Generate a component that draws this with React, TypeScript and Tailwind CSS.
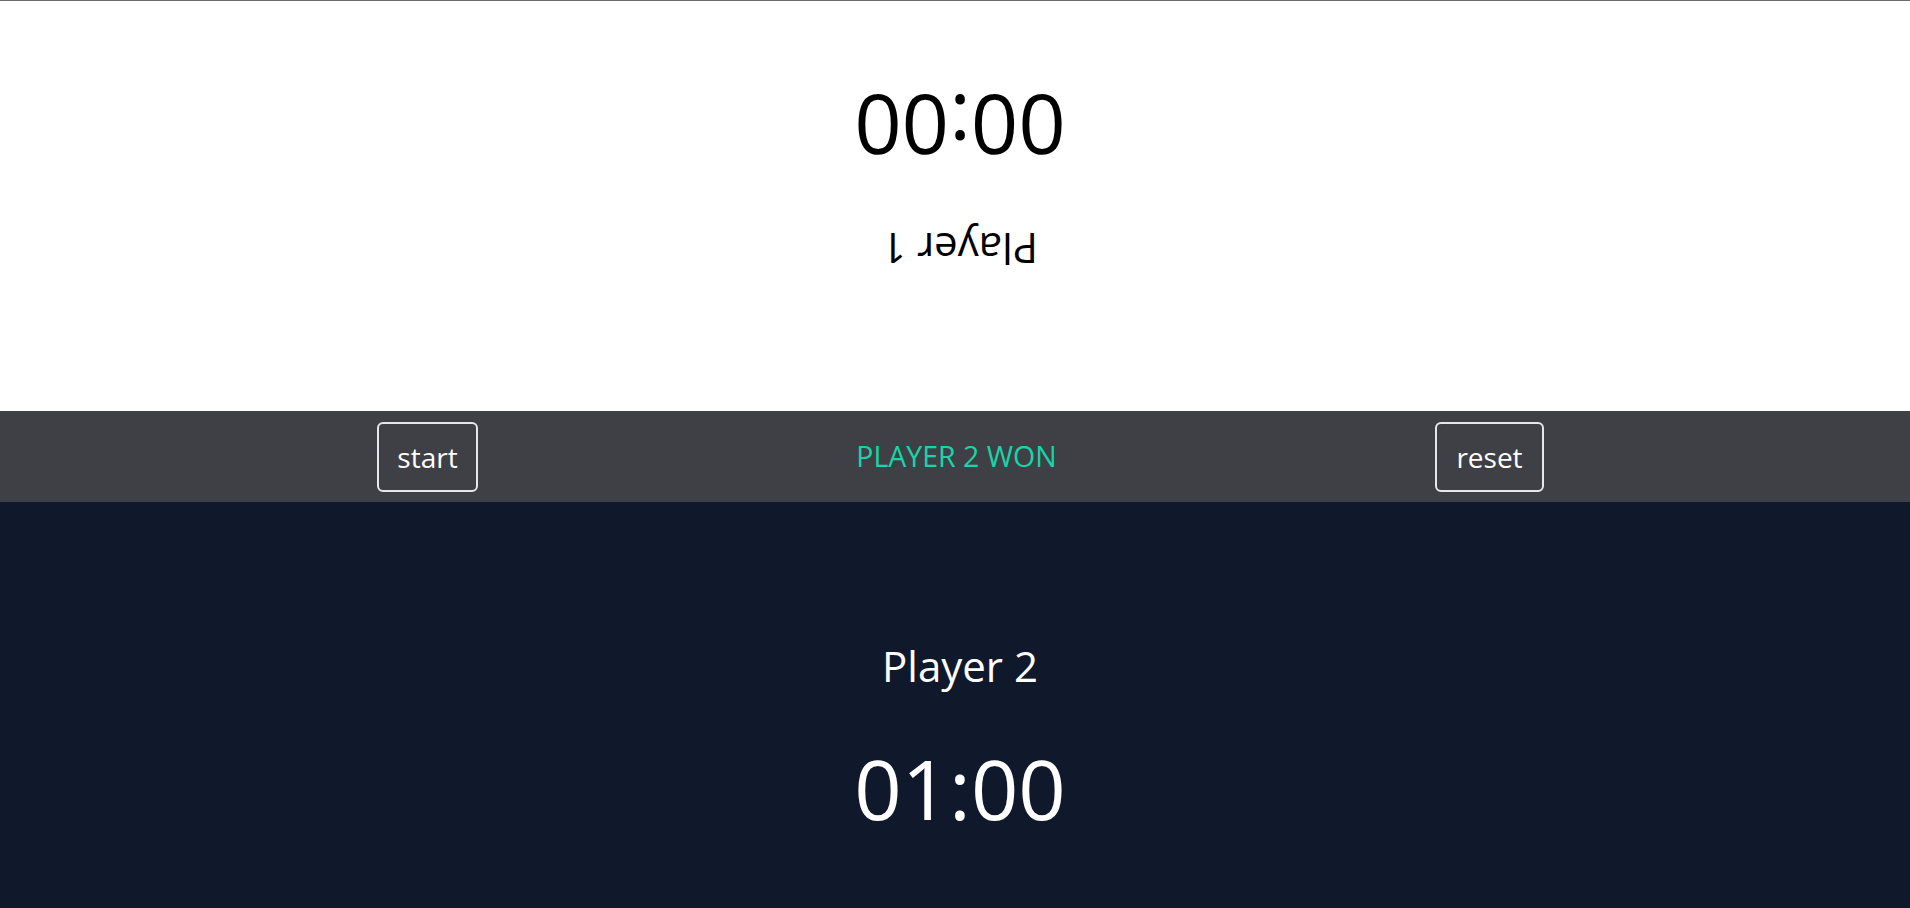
import React, { useState } from 'react';

const font = { fontFamily: '"Open Sans", "Noto Sans", sans-serif' };

type PanelProps = {
  name: string;
  time: string;
  flipped?: boolean;
};

const PlayerPanel: React.FC<PanelProps> = ({ name, time, flipped }) => {
  return (
    <div
      className={
        flipped
          ? 'h-[410px] bg-white text-black rotate-180 flex flex-col items-center pt-[141px] pr-[10px]'
          : 'flex-1 bg-[#10182b] text-white flex flex-col items-center pt-[143px] pl-[10px]'
      }
    >
      <div className="text-[42px] leading-none">{name}</div>
      <div className="text-[83px] leading-none mt-[59px]">{time}</div>
    </div>
  );
};

export default function App() {
  const [winner] = useState('PLAYER 2 WON');

  return (
    <div className="h-screen flex flex-col border-t border-[#6b6b6b] overflow-hidden" style={font}>
      {/* Player 1 - upside down */}
      <PlayerPanel name="Player 1" time="00:00" flipped />

      {/* Controls */}
      <div className="h-[91px] bg-[#3f4046] flex items-center justify-between pl-[377px] pr-[366px]">
        <button className="h-[70px] w-[101px] border-2 border-gray-200 rounded-md text-white text-[28px]">
          start
        </button>
        <span className="text-[#17d5a8] text-[28.5px]">{winner}</span>
        <button className="h-[70px] w-[109px] border-2 border-gray-200 rounded-md text-white text-[28px]">
          reset
        </button>
      </div>

      {/* Player 2 */}
      <PlayerPanel name="Player 2" time="01:00" />
    </div>
  );
}
